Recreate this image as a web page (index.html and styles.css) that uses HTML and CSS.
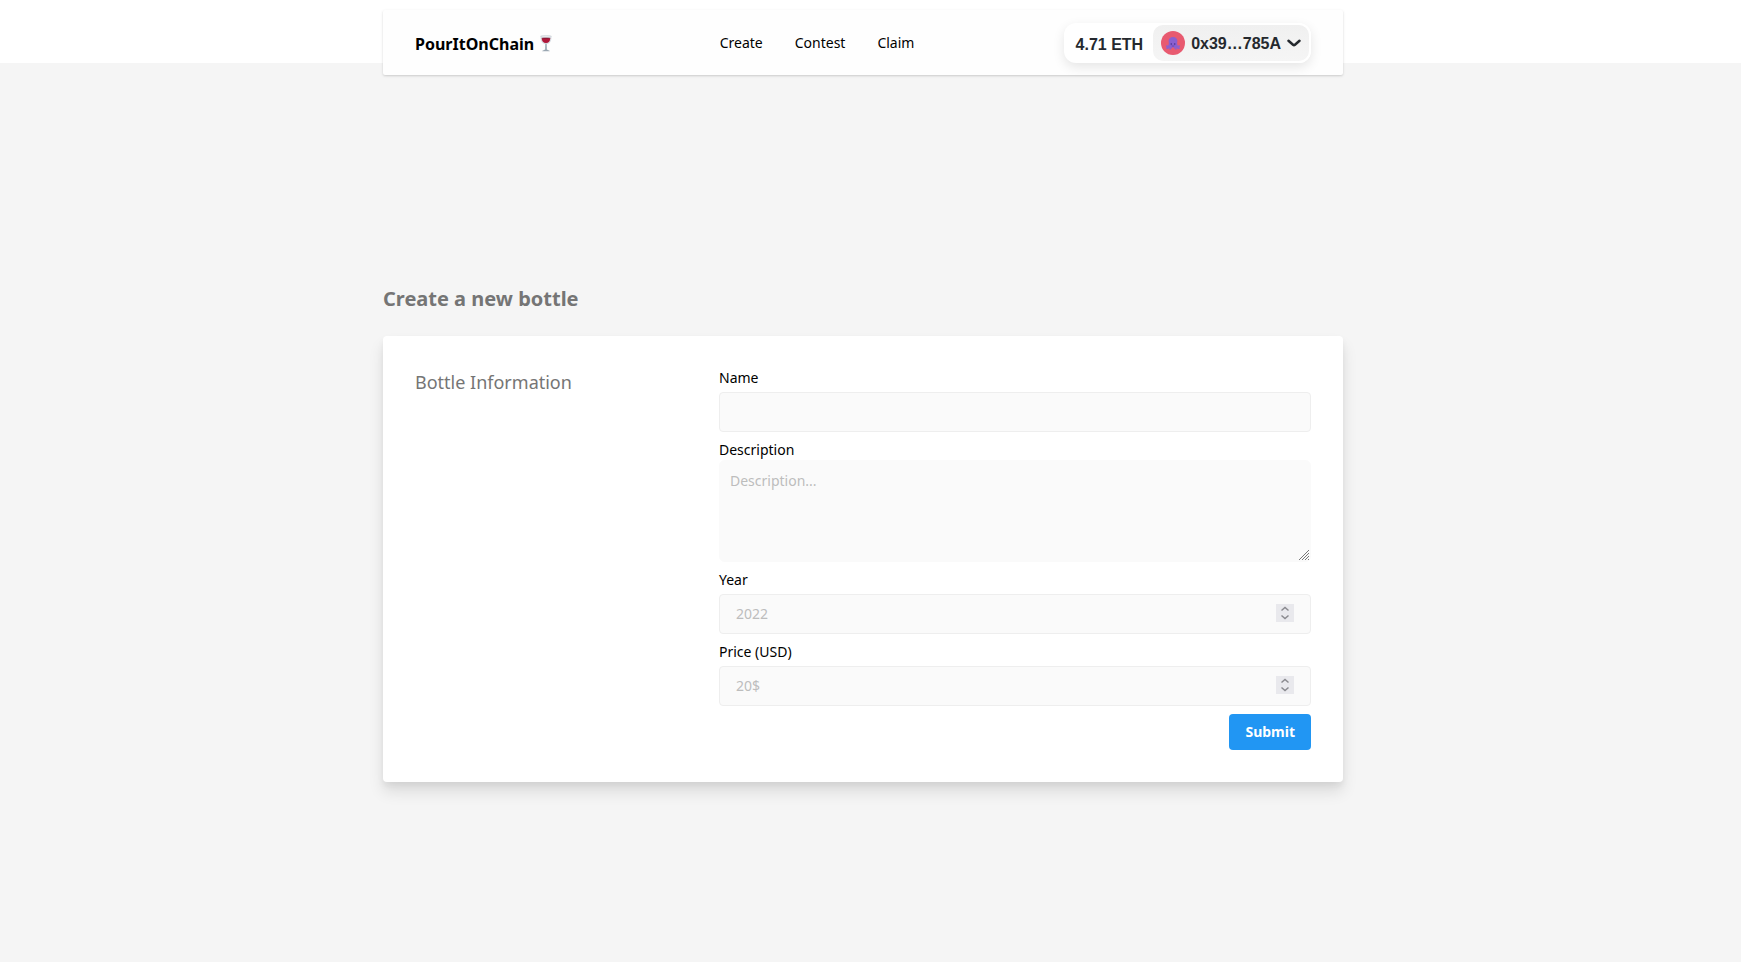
FILE: index.html
```html
<!DOCTYPE html>
<html lang="en">
<head>
<meta charset="utf-8">
<meta name="viewport" content="width=device-width, initial-scale=1">
<title>PourItOnChain</title>
<link rel="stylesheet" href="styles.css">
</head>
<body class="page">
  <header class="band">
    <nav class="navbar">
      <a class="brand" href="#">
        <span>PourItOnChain</span>
        <svg class="glass" width="12" height="17" viewBox="0 0 12 17" aria-hidden="true">
          <path d="M.6 1.200C.2 5.500 1.800 9 6 9s5.800-3.500 5.400-7.800z" fill="#d9dfe4"/>
          <path d="M1.700 3.200C1.900 6.300 3.300 8 6 8s4.100-1.700 4.300-4.800z" fill="#b0173a"/>
          <ellipse cx="6" cy="3.200" rx="4.300" ry=".8" fill="#8e1733"/>
          <ellipse cx="6" cy="1.300" rx="5.400" ry=".9" fill="#eef1f3" stroke="#b4bcc2" stroke-width=".4"/>
          <path d="M5.300 8.800h1.400l.2 5.700c.3.600 2.600.6 2.900 1.700H2.200c.3-1.100 2.600-1.100 2.900-1.700z" fill="#9aa7b2"/>
        </svg>
      </a>
      <div class="links">
        <a class="link" href="#">Create</a>
        <a class="link" href="#">Contest</a>
        <a class="link" href="#">Claim</a>
      </div>
      <div class="wallet">
        <span class="balance">4.71 ETH</span>
        <button class="account" type="button">
          <svg class="avatar" width="24" height="24" viewBox="0 0 24 24" aria-hidden="true">
            <circle cx="12" cy="12" r="12" fill="#e85a70"/>
            <path d="M8.500 12.500c0 2.500-1 3.500-2.800 2.500M9.500 14c-.3 2.500-1.500 3.300-3.700 3.100M10.800 14.500c0 2-.6 3-1.800 3.500M15.500 12.500c0 2.500 1 3.500 2.800 2.500M14.500 14c.3 2.500 1.500 3.300 3.700 3.100M13.200 14.500c0 2 .6 3 1.800 3.500" fill="none" stroke="#8a60d0" stroke-width="1.500" stroke-linecap="round"/>
            <path d="M12 6c-2.800 0-4.400 1.700-4.400 4.100 0 1.600.7 2.300.7 3.400 0 1.800 1.500 3 3.700 3s3.700-1.200 3.700-3c0-1.100.7-1.800.7-3.400C16.400 7.700 14.800 6 12 6z" fill="#8a60d0"/>
            <circle cx="10.300" cy="13" r=".8" fill="#45308c"/>
            <circle cx="13.700" cy="13" r=".8" fill="#45308c"/>
            <path d="M10.700 14.800q1.300.8 2.600 0" fill="none" stroke="#5a3aa8" stroke-width=".7"/>
          </svg>
          <span>0x39…785A</span>
          <svg class="chevron" width="14" height="8" viewBox="0 0 14 8" fill="none" aria-hidden="true"><path d="M1.500 1.800 L6 5.700 Q7 6.500 8 5.700 L12.500 1.800" stroke="#25292e" stroke-width="2.500" stroke-linecap="round"/></svg>
        </button>
      </div>
    </nav>
  </header>
  <main class="content">
    <h1 class="title">Create a new bottle</h1>
    <form class="card">
      <h2 class="section">Bottle Information</h2>
      <div class="fields">
        <div class="field">
          <label class="label" for="name">Name</label>
          <input class="input" id="name" type="text">
        </div>
        <div class="field field-area">
          <label class="label" for="description">Description</label>
          <textarea class="area" id="description" placeholder="Description..."></textarea>
        </div>
        <div class="field">
          <label class="label" for="year">Year</label>
          <input class="input" id="year" type="number" placeholder="2022">
        </div>
        <div class="field">
          <label class="label" for="price">Price (USD)</label>
          <input class="input" id="price" type="number" placeholder="20$">
        </div>
        <button class="submit" type="submit">Submit</button>
      </div>
    </form>
  </main>
</body>
</html>
```
FILE: styles.css
```css
*, *::before, *::after { box-sizing: border-box; }

.page {
  margin: 0;
  padding-right: 15px;
  min-height: 100vh;
  background: linear-gradient(#fff 63px, #f5f5f5 63px);
  color: #000;
  font: 14px/20px "Noto Sans", sans-serif;
}

.band {
  height: 63px;
  padding-top: 10px;
}

.navbar {
  display: grid;
  grid-template-columns: repeat(3, 1fr);
  column-gap: 18px;
  align-items: center;
  max-width: 960px;
  height: 65px;
  margin: 0 auto;
  padding: 0 32px;
  background: #fefefe;
  border-radius: 2px;
  box-shadow: 0 1px 3px rgba(0, 0, 0, 0.12), 0 1px 2px rgba(0, 0, 0, 0.06);
}

.brand {
  display: flex;
  align-items: center;
  gap: 6px;
  padding-top: 2px;
  color: inherit;
  font-size: 16px;
  font-weight: 700;
  line-height: 24px;
  text-decoration: none;
}

.links {
  display: flex;
  gap: 32px;
}

.link {
  color: inherit;
  text-decoration: none;
}

.wallet {
  display: flex;
  align-items: center;
  justify-self: end;
  background: #fff;
  border-radius: 12px;
  box-shadow: 0 4px 12px rgba(0, 0, 0, 0.1);
  color: #25292e;
  font: 700 16px/24px "Liberation Sans", Arial, sans-serif;
}

.balance { padding: 10px 8px 6px 12px; }

.account {
  display: flex;
  align-items: center;
  gap: 6px;
  height: 40px;
  padding: 6px 8px;
  border: 2px solid #fff;
  border-radius: 12px;
  background: linear-gradient(#f0f0f0, #f5f5f5);
  color: inherit;
  font: inherit;
}

.account > span { padding-top: 3px; }

.content {
  max-width: 960px;
  margin: 0 auto;
  padding-top: 221px;
}

.title {
  margin: 0 0 22px;
  color: #757575;
  font-size: 20px;
  font-weight: 700;
  line-height: 30px;
}

.card {
  display: grid;
  grid-template-columns: repeat(3, 1fr);
  gap: 16px;
  padding: 32px;
  background: #fff;
  border-radius: 4px;
  box-shadow: 0 10px 15px rgba(0, 0, 0, 0.1), 0 4px 6px rgba(0, 0, 0, 0.05);
}

.section {
  margin: 0;
  color: #757575;
  font-size: 18px;
  font-weight: 400;
  line-height: 28px;
}

.fields {
  grid-column: span 2;
  display: flex;
  flex-direction: column;
  gap: 8px;
}

.field {
  display: flex;
  flex-direction: column;
  gap: 4px;
}

.field-area { gap: 0; }

.input, .area {
  width: 100%;
  margin: 0;
  border: 1px solid #eee;
  border-radius: 4px;
  background: #fafafa;
  color: #000;
  font: inherit;
}

.input {
  height: 40px;
  padding: 0 16px 1px;
}

.area {
  display: block;
  height: 102px;
  padding: 10px;
  border-color: #fafafa;
  border-radius: 6px;
  resize: vertical;
}

.area::-webkit-resizer {
  background: url("data:image/svg+xml,%3Csvg xmlns='http://www.w3.org/2000/svg' width='15' height='15' fill='none' stroke='%23777' stroke-width='1'%3E%3Cpath d='M4 14L14 4M7 14l7-7M10 14l4-4M13 14l1-1'/%3E%3C/svg%3E") no-repeat right bottom;
}

.input::placeholder, .area::placeholder { color: #bdbdbd; }

.input::-webkit-inner-spin-button {
  appearance: none;
  width: 18px;
  height: 18px;
  margin: 0;
  opacity: 1;
  background: #e9e9ed url("data:image/svg+xml,%3Csvg xmlns='http://www.w3.org/2000/svg' viewBox='0 0 18 18' fill='none' stroke='%238a8a8f' stroke-width='1.5'%3E%3Cpath d='M5.500 6.500L9 3.500l3.500 3M5.500 11.500L9 14.500l3.500-3'/%3E%3C/svg%3E");
}

.submit {
  align-self: flex-end;
  height: 36px;
  padding: 8px 16px;
  border: 0;
  border-radius: 4px;
  background: #2196f3;
  color: #fff;
  font: inherit;
  font-weight: 700;
}
```
